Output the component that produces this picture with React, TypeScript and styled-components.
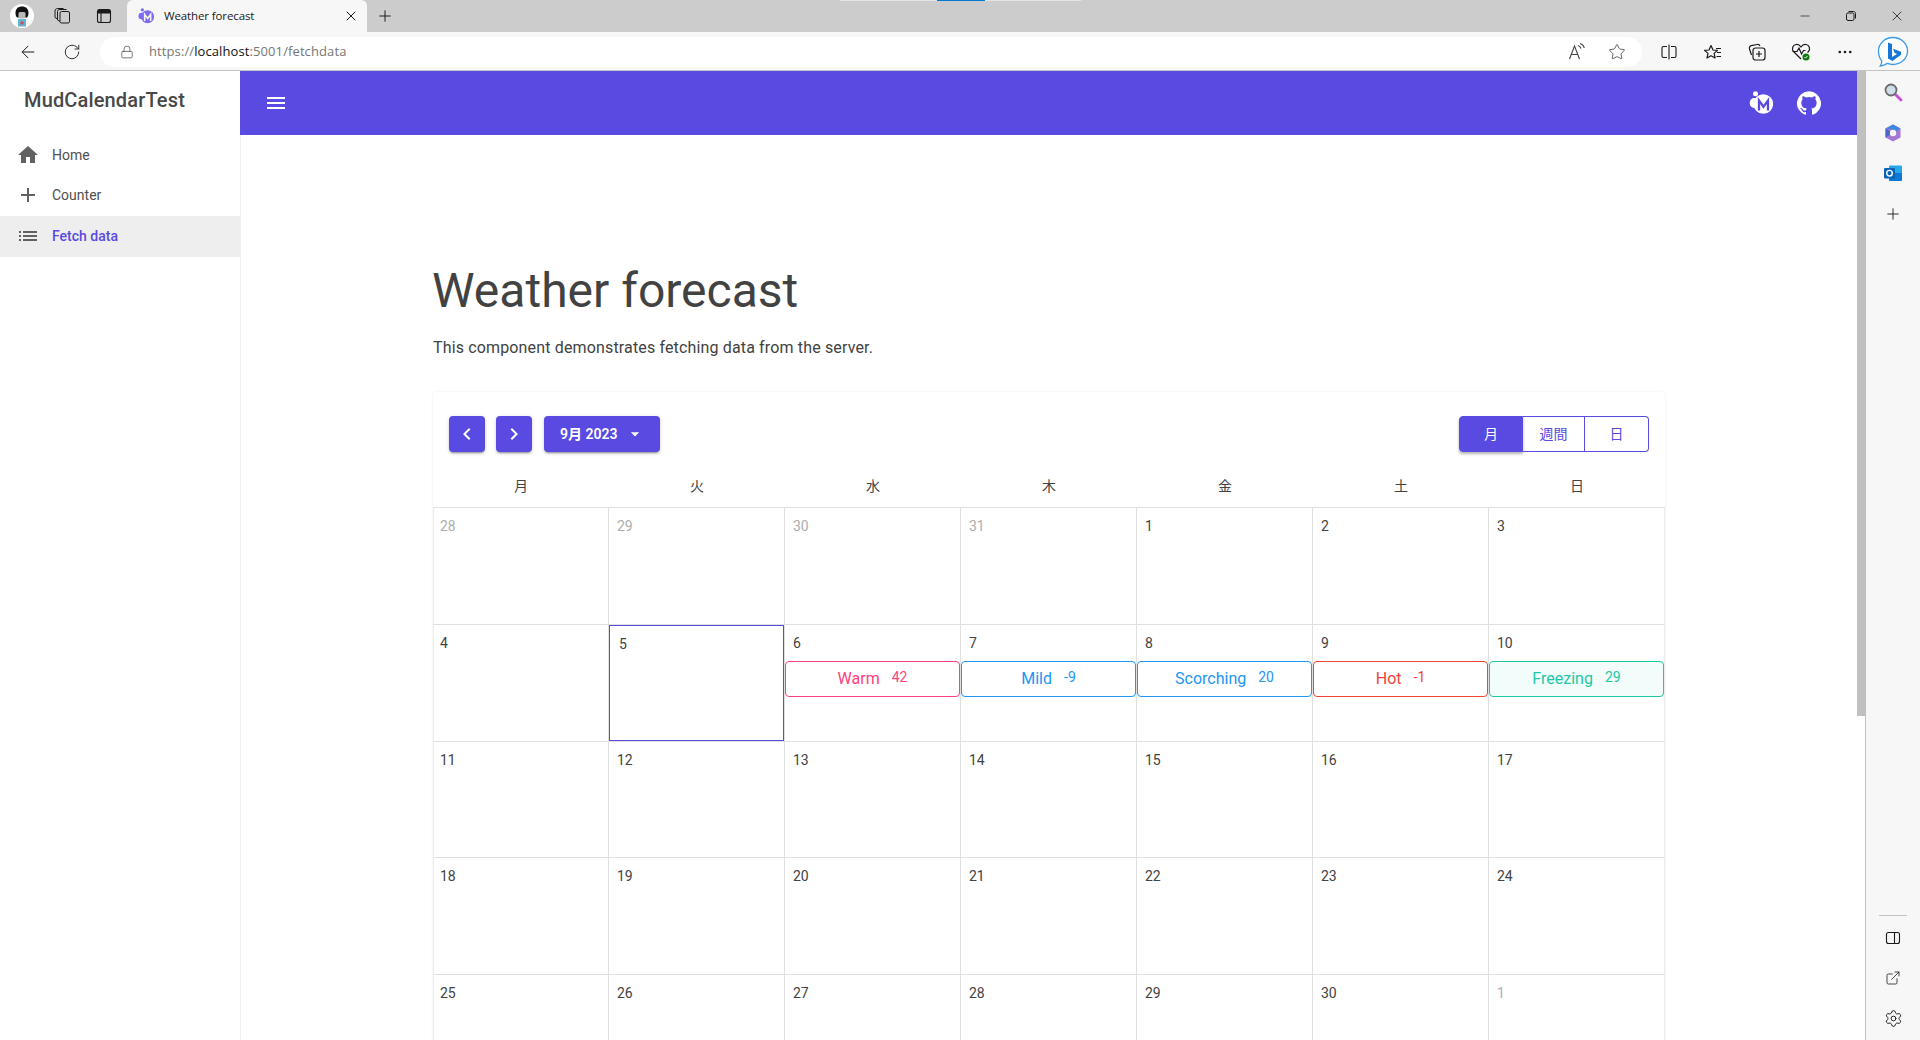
import React from "react";
import styled, { createGlobalStyle } from "styled-components";
import {
  ArrowLeft,
  ExternalLink,
  Lock,
  MoreHorizontal,
  Plus,
  RotateCw,
  Settings,
  Star,
  X,
  Minus,
} from "lucide-react";

const PRIMARY = "#594ae2";
const TEXT = "#424242";
const LINE = "#e0e0e0";

const GlobalStyle = createGlobalStyle`
  html, body {
    margin: 0;
    height: 100%;
    overflow: hidden;
    background: #fff;
  }
  * {
    box-sizing: border-box;
  }
  body {
    font-family: Roboto, "Noto Sans CJK JP", sans-serif;
    color: ${TEXT};
  }
`;

const Window = styled.div`
  position: relative;
  width: 1920px;
  height: 1040px;
  display: flex;
  flex-direction: column;
  overflow: hidden;
`;

const CaptureBar = styled.div`
  position: absolute;
  top: 0;
  left: 840px;
  width: 241px;
  height: 1px;
  background: #e4e4e4;
  display: flex;
  justify-content: center;
  &::after {
    content: "";
    width: 48px;
    background: #0078d4;
  }
`;

const TabStrip = styled.div`
  height: 32px;
  background: #cccccc;
  display: flex;
  align-items: center;
  flex-shrink: 0;
`;

const StripIcon = styled.div<{ $width: number }>`
  width: ${(p) => p.$width}px;
  display: flex;
  align-items: center;
  justify-content: center;
  color: #1a1a1a;
`;

const Tab = styled.div`
  width: 240px;
  height: 32px;
  background: #f7f7f7;
  border-radius: 6px 6px 0 0;
  display: flex;
  align-items: center;
  padding: 0 8px 0 11px;
  gap: 10px;
  font: 11.5px "Open Sans", sans-serif;
  color: #1a1a1a;
`;

const TabTitle = styled.span`
  flex: 1;
  letter-spacing: -0.12px;
  padding-bottom: 2px;
`;

const WindowControls = styled.div`
  margin-left: auto;
  display: flex;
  align-items: center;
  color: #1a1a1a;
`;

const WindowControl = styled.div`
  width: 46px;
  display: flex;
  justify-content: center;
`;

const Toolbar = styled.div`
  height: 39px;
  background: #f7f7f7;
  border-bottom: 1px solid #c4c4c4;
  display: flex;
  align-items: center;
  flex-shrink: 0;
  padding-top: 1px;
`;

const ToolButton = styled.div<{ $width: number; $gap?: number }>`
  width: ${(p) => p.$width}px;
  margin-left: ${(p) => p.$gap || 0}px;
  display: flex;
  align-items: center;
  justify-content: center;
  color: #1a1a1a;
  flex-shrink: 0;
`;

const AddressBar = styled.div`
  width: 1542px;
  height: 30px;
  margin-left: 12px;
  background: #fff;
  border-radius: 15px;
  display: flex;
  align-items: center;
  padding: 0 5px 0 20px;
  font: 13px "Open Sans", sans-serif;
  color: #767676;
  flex-shrink: 0;
  svg:first-child {
    color: #444;
  }
`;

const UrlText = styled.span`
  margin-left: 15px;
  flex: 1;
  letter-spacing: 0.1px;
  position: relative;
  top: -1px;
  b {
    font-weight: 400;
    color: #111;
  }
`;

const AddressAction = styled.div`
  width: 40px;
  display: flex;
  justify-content: center;
  color: #777;
`;

const Body = styled.div`
  flex: 1;
  display: flex;
  min-height: 0;
`;

const Page = styled.div`
  flex: 1;
  display: flex;
  min-width: 0;
`;

const Drawer = styled.nav`
  width: 240px;
  flex-shrink: 0;
  background: #fff;
`;

const DrawerTitle = styled.div`
  height: 64px;
  padding: 0 24px;
  display: flex;
  align-items: center;
  font-size: 20px;
  font-weight: 500;
  letter-spacing: 0.15px;
  color: #484848;
  margin-top: -3px;
`;

const NavList = styled.div`
  padding-top: 3px;
`;

const NavItem = styled.div<{ $active?: boolean }>`
  height: 40.5px;
  display: flex;
  align-items: center;
  padding: 0 0 1px 16px;
  gap: 12px;
  font-size: 14px;
  font-weight: ${(p) => (p.$active ? 500 : 400)};
  color: ${(p) => (p.$active ? PRIMARY : "#505050")};
  background: ${(p) => (p.$active ? "#eeeeee" : "transparent")};
  svg {
    color: #616161;
  }
`;

const Content = styled.div`
  flex: 1;
  min-width: 0;
  display: flex;
  flex-direction: column;
  border-left: 1px solid #eeeeee;
`;

const AppBar = styled.header`
  height: 64px;
  margin-left: -1px;
  flex-shrink: 0;
  background: ${PRIMARY};
  color: #fff;
  display: flex;
  align-items: center;
  padding: 0 24px;
`;

const AppBarButton = styled.div`
  width: 48px;
  height: 48px;
  display: flex;
  align-items: center;
  justify-content: center;
`;

const MenuButton = styled(AppBarButton)`
  margin-right: auto;
  width: 24px;
`;

const Container = styled.main`
  width: 1280px;
  margin: 0 auto;
  padding: 124px 24px 0;
`;

const Heading = styled.h1`
  margin: 0 0 0 -1px;
  font-size: 48px;
  font-weight: 400;
  line-height: 64px;
  color: ${TEXT};
`;

const Lead = styled.p`
  margin: 13px 0 0;
  font-size: 16px;
  line-height: 24px;
  letter-spacing: 0.15px;
  color: ${TEXT};
`;

const Card = styled.section`
  margin-top: 32px;
  background: #fff;
  border-radius: 4px;
  box-shadow: 0 0 3px rgba(0, 0, 0, 0.08);
`;

const CalendarBar = styled.div`
  display: flex;
  align-items: center;
  padding: 24px 16px 0 16px;
  gap: 11px;
`;

const FilledButton = styled.button`
  height: 36px;
  width: 36px;
  border: none;
  border-radius: 4px;
  background: ${PRIMARY};
  color: #fff;
  display: flex;
  align-items: center;
  justify-content: center;
  padding: 0;
  box-shadow: 0 3px 1px -2px rgba(0, 0, 0, 0.2), 0 2px 2px 0 rgba(0, 0, 0, 0.14), 0 1px 5px 0 rgba(0, 0, 0, 0.12);
`;

const DateButton = styled(FilledButton)`
  width: 116px;
  margin-left: 1px;
  justify-content: flex-start;
  padding: 0 0 2px 16px;
  font: 600 14px Roboto, "Noto Sans CJK JP", sans-serif;
  svg {
    margin: 2px 0 0 8px;
  }
`;

const ViewGroup = styled.div`
  margin-left: auto;
  display: flex;
  height: 36px;
`;

const ViewButton = styled.button<{ $active?: boolean; $width: number }>`
  width: ${(p) => p.$width}px;
  border: 1px solid ${PRIMARY};
  border-left-width: 0;
  background: ${(p) => (p.$active ? PRIMARY : "#fff")};
  color: ${(p) => (p.$active ? "#fff" : PRIMARY)};
  font: 400 14px Roboto, "Noto Sans CJK JP", sans-serif;
  padding: 0 0 2px;
  ${(p) => p.$active && "box-shadow: 0 2px 3px rgba(0, 0, 0, 0.3); position: relative;"}
  &:first-child {
    border-radius: 4px 0 0 4px;
    border-left-width: 1px;
  }
  &:last-child {
    border-radius: 0 4px 4px 0;
  }
`;

const Weekdays = styled.div`
  display: grid;
  grid-template-columns: repeat(7, 176px);
  height: 56px;
  border-bottom: 1px solid ${LINE};
`;

const Weekday = styled.div`
  display: flex;
  align-items: center;
  justify-content: center;
  padding-top: 11px;
  font-size: 14px;
  color: ${TEXT};
`;

const MonthGrid = styled.div`
  display: grid;
  grid-template-columns: repeat(7, 176px);
  grid-auto-rows: 116.75px;
`;

const DayNumber = styled.div<{ $muted?: boolean }>`
  padding-left: 8px;
  font-size: 14px;
  line-height: 20px;
  color: ${(p) => (p.$muted ? "#adadad" : TEXT)};
`;

const Cell = styled.div<{ $selected?: boolean }>`
  border-right: 1px solid ${LINE};
  border-bottom: 1px solid ${LINE};
  padding: 8px 0 0;
  &:nth-child(7n + 1) {
    box-shadow: inset 1px 0 0 #ececec;
  }
  &:nth-child(7n + 1) ${DayNumber} {
    padding-left: 7px;
  }
  &:nth-child(7n) {
    border-right-color: #ececec;
  }
  ${(p) =>
    p.$selected &&
    `
    box-shadow: inset 0 0 0 1px ${PRIMARY};
    padding: 9px 0 0 2px;
  `}
`;

const EventChip = styled.div<{ $color: string; $tint?: string }>`
  height: 36px;
  margin: 8px 0 0 0;
  width: 175px;
  border: 1px solid ${(p) => p.$color};
  border-radius: 4px;
  background: ${(p) => p.$tint || "#fff"};
  color: ${(p) => p.$color};
  display: flex;
  align-items: center;
  justify-content: center;
  gap: 12px;
  font-size: 16px;
`;

const EventValue = styled.span`
  font-size: 14px;
  position: relative;
  top: -2px;
`;

const ScrollTrack = styled.div`
  width: 9px;
  flex-shrink: 0;
  border-right: 1px solid #c0c0c0;
`;

const ScrollThumb = styled.div`
  height: 645px;
  margin-right: -1px;
  background: #c0c0c0;
`;

const EdgeBar = styled.aside`
  width: 54px;
  flex-shrink: 0;
  background: #f7f7f7;
  display: flex;
  flex-direction: column;
  align-items: center;
  color: #1a1a1a;
  padding-top: 1px;
`;

const EdgeIcon = styled.div`
  height: 40.5px;
  display: flex;
  align-items: center;
  justify-content: center;
`;

const EdgeBottom = styled.div`
  margin-top: auto;
  padding-bottom: 2px;
  display: flex;
  flex-direction: column;
  align-items: center;
`;

const EdgeRule = styled.div`
  width: 28px;
  height: 1px;
  background: #c4c4c4;
  margin-bottom: 2px;
`;

const EdgeBottomIcon = styled.div`
  height: 40px;
  display: flex;
  align-items: center;
  justify-content: center;
`;

const MaterialIcon = ({ d, size = 24 }: { d: string; size?: number }) => (
  <svg width={size} height={size} viewBox="0 0 24 24" fill="currentColor">
    <path d={d} />
  </svg>
);

const HOME = "M10 20v-6h4v6h5v-8h3L12 3 2 12h3v8z";
const ADD = "M19 13h-6v6h-2v-6H5v-2h6V5h2v6h6v2z";
const LIST = "M3 13h2v-2H3v2zm0 4h2v-2H3v2zm0-8h2V7H3v2zm4 4h14v-2H7v2zm0 4h14v-2H7v2zM7 7v2h14V7H7z";
const MENU = "M3 18h18v-2H3v2zm0-5h18v-2H3v2zm0-7v2h18V6H3z";
const PREV = "M15.41 7.41L14 6l-6 6 6 6 1.41-1.41L10.83 12z";
const NEXT = "M10 6L8.59 7.41 13.17 12l-4.58 4.59L10 18l6-6z";
const DROP = "M7 10l5 5 5-5z";
const GITHUB =
  "M12 .3a12 12 0 0 0-3.8 23.4c.6.1.8-.3.8-.6v-2c-3.3.7-4-1.6-4-1.6-.6-1.4-1.4-1.8-1.4-1.8-1-.7.1-.7.1-.7 1.2 0 1.9 1.2 1.9 1.2 1 1.8 2.8 1.3 3.5 1 0-.8.4-1.3.7-1.6-2.7-.3-5.5-1.3-5.5-6 0-1.2.5-2.3 1.3-3.1-.2-.4-.6-1.6 0-3.2 0 0 1-.3 3.4 1.2a11.5 11.5 0 0 1 6 0c2.3-1.5 3.3-1.2 3.3-1.2.6 1.6.2 2.8 0 3.2.9.8 1.3 1.9 1.3 3.2 0 4.6-2.8 5.6-5.5 5.9.5.4.9 1 .9 2.2v3.3c0 .3.1.7.8.6A12 12 0 0 0 12 .3";

// blob with a dot and a cut-out M, used for the favicon and the app bar
const MudLogo = ({ size, color, cut }: { size: number; color: string; cut: string }) => (
  <svg width={size} height={size} viewBox="0 0 24 24">
    <circle cx="6.500" cy="2.800" r="2.500" fill={color} />
    <circle cx="14.300" cy="13" r="9.800" fill={color} />
    <ellipse cx="5" cy="12" rx="4.300" ry="5" fill={color} />
    <path d="M10 19.500V9.500l4.500 6.200L19 9.500v10" fill="none" stroke={cut} strokeWidth="2.300" />
  </svg>
);

const Avatar = () => (
  <svg width="24" height="24" viewBox="0 0 24 24">
    <circle cx="12" cy="12" r="12" fill="#fff" />
    <path d="M5.500 9c0-4.500 3-6.500 6.500-6.500S18.500 4.500 18.500 9c0 2-.7 3.500-1.500 4.500H7C6.200 12.500 5.500 11 5.500 9z" fill="#111" />
    <rect x="8.500" y="8" width="7" height="6.500" rx="1.500" fill="#b9b9b9" />
    <rect x="8" y="15" width="8" height="7.500" fill="#5fb6d6" />
    <rect x="10.500" y="17.500" width="3" height="3" fill="#d9465a" />
  </svg>
);

const Workspaces = () => (
  <svg width="18" height="18" viewBox="0 0 18 18" fill="none" stroke="currentColor" strokeWidth="1">
    <rect x="7" y="4.500" width="9.500" height="11.500" rx="1.500" />
    <path d="M7 14.500 4.500 13V4.500C4.500 3 5.500 2.500 7 2.500h6.500" />
    <path d="M4.500 12 2 10.500V4C2 2.500 3 1.500 4.500 1.500h6" />
  </svg>
);

const VerticalTabs = () => (
  <svg width="16" height="16" viewBox="0 0 16 16" fill="none" stroke="currentColor" strokeWidth="1.100">
    <rect x="1.500" y="1.500" width="13" height="13" rx="2" />
    <path d="M1.500 5h13M5 5v9.500" />
    <rect x="2" y="2" width="12" height="3" fill="currentColor" stroke="none" />
  </svg>
);

const RestoreIcon = () => (
  <svg width="12" height="12" viewBox="0 0 12 12" fill="none" stroke="currentColor">
    <rect x="1.500" y="3" width="7.500" height="7.500" rx="1.500" />
    <path d="M3.500 1.500h5c1.200 0 2 .8 2 2v5" />
  </svg>
);

const ReadAloud = () => (
  <svg width="20" height="20" viewBox="0 0 20 20" fill="none" stroke="currentColor" strokeWidth="1.100">
    <path d="M2.500 17 7.500 4l5 13M4.300 12.500h6.400" />
    <path d="M11 3.500c1.500.4 2.500 1.500 3 3M13 1.500c2.300.6 3.800 2.200 4.300 4.500" />
  </svg>
);

const SplitScreen = () => (
  <svg width="18" height="18" viewBox="0 0 18 18" fill="none" stroke="currentColor" strokeWidth="1.100">
    <path d="M7 3.500H3.500c-1 0-1.500.5-1.500 1.500v8c0 1 .5 1.500 1.500 1.500H7M11 3.500h3.500c1 0 1.500.5 1.500 1.500v8c0 1-.5 1.500-1.500 1.500H11M9 1.500v15" />
  </svg>
);

const Favorites = () => (
  <svg width="20" height="20" viewBox="0 0 20 20" fill="none" stroke="currentColor" strokeWidth="1.200">
    <path d="M8 2.500 10 7l4.500.4-3.400 3 1 4.600L8 12.700 4 15l1-4.600-3.500-3L6 7z" strokeLinejoin="round" transform="translate(0 1)" />
    <path d="M13 6.500h5M14 10.500h4M13.500 14.500h4.500" />
  </svg>
);

const Collections = () => (
  <svg width="20" height="20" viewBox="0 0 20 20" fill="none" stroke="currentColor" strokeWidth="1.200">
    <path d="M4.500 13 2.500 7c-.4-1.500.3-3 1.800-3.400L10 2.500c1.200-.3 2.500.4 3 1.500" />
    <rect x="6" y="6" width="12" height="12" rx="2.500" fill="#f7f7f7" />
    <path d="M12 9v6M9 12h6" />
  </svg>
);

const Performance = () => (
  <svg width="22" height="22" viewBox="0 0 22 22">
    <path
      d="M11 18 3.500 10.500C1.500 8 2.500 4 6 3.500c2-.3 3.800.7 5 2.500 1.200-1.800 3-2.800 5-2.500 3.500.5 4.500 4.500 2.500 7l-1 1"
      fill="none"
      stroke="#1a1a1a"
      strokeWidth="1.200"
    />
    <path d="M2.500 10.500H7l2-3.500 2.500 6 2-3.500h2" fill="none" stroke="#1a1a1a" strokeWidth="1.200" />
    <circle cx="16" cy="16" r="3.500" fill="#107c10" />
    <path d="m14.500 16 1.100 1.100 2-2.200" fill="none" stroke="#fff" strokeWidth=".9" />
  </svg>
);

const BingLogo = () => (
  <svg width="32" height="32" viewBox="0 0 32 32">
    <path
      d="M16 1.500c8 0 14.500 6 14.500 13.500S24 28.500 16 28.500c-2 0-4-.4-5.700-1.100-1.800 1.200-4 2.300-7 2.600 1-1.400 1.400-3 1.500-5C2.700 22.500 1.500 19 1.500 15 1.500 7.500 8 1.500 16 1.500z"
      fill="#fff"
      stroke="#3a9be8"
      strokeWidth="1.300"
    />
    <path d="M11 6.500 15 8v13l5-3-2.500-1.300-1.500-4 8 3v3L15.500 25 11 22.500z" fill="#1677d8" />
  </svg>
);

const EdgeSearch = () => (
  <svg width="20" height="20" viewBox="0 0 20 20">
    <path d="m12 12 6 6" stroke="#c94fd8" strokeWidth="2.800" strokeLinecap="round" />
    <circle cx="8" cy="8" r="5.500" fill="#cfe0ea" stroke="#6b6b6b" strokeWidth="1.800" />
  </svg>
);

const CopilotMark = () => (
  <svg width="20" height="20" viewBox="0 0 20 20">
    <path d="M10 1.500 17.500 5.500v9L10 18.500 2.500 14.500v-9z" fill="#a678d6" />
    <path d="M10 1.500 17.500 5.500 13 8.500 10 6.500 2.500 5.500z" fill="#3f86e0" />
    <path d="M2.500 5.500v9L7 12V8z" fill="#4a67c8" />
    <circle cx="10" cy="10" r="3.200" fill="#f7f7f7" />
  </svg>
);

const OutlookMark = () => (
  <svg width="20" height="20" viewBox="0 0 20 20">
    <rect x="6" y="2.500" width="13" height="15" rx="1.200" fill="#28a8ea" />
    <path d="M6 10h13v7a1 1 0 0 1-1 1H7a1 1 0 0 1-1-1z" fill="#0f78d4" />
    <rect x="1" y="5" width="11" height="10.500" rx="1" fill="#0a64b8" />
    <circle cx="6.500" cy="10.200" r="2.800" fill="none" stroke="#fff" strokeWidth="1.400" />
  </svg>
);

const SidePanel = () => (
  <svg width="16" height="16" viewBox="0 0 16 16" fill="none" stroke="currentColor" strokeWidth="1.100">
    <rect x="1.500" y="2.500" width="13" height="11" rx="2" />
    <path d="M9.500 2.500v11" />
  </svg>
);

type CalendarEvent = { label: string; value: string; color: string; tint?: string };

const EVENTS: Record<number, CalendarEvent> = {
  6: { label: "Warm", value: "42", color: "#ff4081" },
  7: { label: "Mild", value: "-9", color: "#2196f3" },
  8: { label: "Scorching", value: "20", color: "#2196f3" },
  9: { label: "Hot", value: "-1", color: "#f44336" },
  10: { label: "Freezing", value: "29", color: "#1ec8a5", tint: "#f2fcfa" },
};

const WEEKDAYS = ["月", "火", "水", "木", "金", "土", "日"];

const DAYS = [
  ...[28, 29, 30, 31].map((day) => ({ day, muted: true })),
  ...Array.from({ length: 30 }, (_, i) => ({ day: i + 1, muted: false })),
  { day: 1, muted: true },
];

const App = () => {
  return (
    <>
      <GlobalStyle />
      <Window>
        <CaptureBar />
        <TabStrip>
          <StripIcon $width={44}>
            <Avatar />
          </StripIcon>
          <StripIcon $width={36}>
            <Workspaces />
          </StripIcon>
          <StripIcon $width={47}>
            <VerticalTabs />
          </StripIcon>
          <Tab>
            <MudLogo size={16} color="#7c6cf0" cut="#f7f7f7" />
            <TabTitle>Weather forecast</TabTitle>
            <X size={16} strokeWidth={1.5} />
          </Tab>
          <StripIcon $width={36}>
            <Plus size={18} strokeWidth={1.3} />
          </StripIcon>
          <WindowControls>
            <WindowControl>
              <Minus size={14} strokeWidth={1.2} />
            </WindowControl>
            <WindowControl>
              <RestoreIcon />
            </WindowControl>
            <WindowControl>
              <X size={16} strokeWidth={1.2} />
            </WindowControl>
          </WindowControls>
        </TabStrip>
        <Toolbar>
          <ToolButton $width={56}>
            <ArrowLeft size={20} strokeWidth={1.2} />
          </ToolButton>
          <ToolButton $width={32}>
            <RotateCw size={18} strokeWidth={1.2} />
          </ToolButton>
          <AddressBar>
            <Lock size={14} strokeWidth={1.2} />
            <UrlText>
              https://<b>localhost</b>:5001/fetchdata
            </UrlText>
            <AddressAction>
              <ReadAloud />
            </AddressAction>
            <AddressAction>
              <Star size={18} strokeWidth={1.1} />
            </AddressAction>
          </AddressBar>
          <ToolButton $width={44} $gap={5}>
            <SplitScreen />
          </ToolButton>
          <ToolButton $width={44}>
            <Favorites />
          </ToolButton>
          <ToolButton $width={44}>
            <Collections />
          </ToolButton>
          <ToolButton $width={44}>
            <Performance />
          </ToolButton>
          <ToolButton $width={44}>
            <MoreHorizontal size={18} strokeWidth={1.6} />
          </ToolButton>
          <ToolButton $width={52}>
            <BingLogo />
          </ToolButton>
        </Toolbar>
        <Body>
          <Page>
            <Drawer>
              <DrawerTitle>MudCalendarTest</DrawerTitle>
              <NavList>
                <NavItem>
                  <MaterialIcon d={HOME} />
                  Home
                </NavItem>
                <NavItem>
                  <MaterialIcon d={ADD} />
                  Counter
                </NavItem>
                <NavItem $active>
                  <MaterialIcon d={LIST} />
                  Fetch data
                </NavItem>
              </NavList>
            </Drawer>
            <Content>
              <AppBar>
                <MenuButton>
                  <MaterialIcon d={MENU} />
                </MenuButton>
                <AppBarButton>
                  <MudLogo size={24} color="#fff" cut={PRIMARY} />
                </AppBarButton>
                <AppBarButton>
                  <MaterialIcon d={GITHUB} />
                </AppBarButton>
              </AppBar>
              <Container>
                <Heading>Weather forecast</Heading>
                <Lead>This component demonstrates fetching data from the server.</Lead>
                <Card>
                  <CalendarBar>
                    <FilledButton aria-label="previous">
                      <MaterialIcon d={PREV} />
                    </FilledButton>
                    <FilledButton aria-label="next">
                      <MaterialIcon d={NEXT} />
                    </FilledButton>
                    <DateButton>
                      9月 2023
                      <MaterialIcon d={DROP} size={20} />
                    </DateButton>
                    <ViewGroup>
                      <ViewButton $active $width={64}>
                        月
                      </ViewButton>
                      <ViewButton $width={62}>週間</ViewButton>
                      <ViewButton $width={64}>日</ViewButton>
                    </ViewGroup>
                  </CalendarBar>
                  <Weekdays>
                    {WEEKDAYS.map((name) => (
                      <Weekday key={name}>{name}</Weekday>
                    ))}
                  </Weekdays>
                  <MonthGrid>
                    {DAYS.map(({ day, muted }, i) => {
                      const event = muted ? undefined : EVENTS[day];
                      return (
                        <Cell key={i} $selected={!muted && day === 5}>
                          <DayNumber $muted={muted}>{day}</DayNumber>
                          {event && (
                            <EventChip $color={event.color} $tint={event.tint}>
                              <span>{event.label}</span>
                              <EventValue>{event.value}</EventValue>
                            </EventChip>
                          )}
                        </Cell>
                      );
                    })}
                  </MonthGrid>
                </Card>
              </Container>
            </Content>
          </Page>
          <ScrollTrack>
            <ScrollThumb />
          </ScrollTrack>
          <EdgeBar>
            <EdgeIcon>
              <EdgeSearch />
            </EdgeIcon>
            <EdgeIcon>
              <CopilotMark />
            </EdgeIcon>
            <EdgeIcon>
              <OutlookMark />
            </EdgeIcon>
            <EdgeIcon>
              <Plus size={18} strokeWidth={1.2} />
            </EdgeIcon>
            <EdgeBottom>
              <EdgeRule />
              <EdgeBottomIcon>
                <SidePanel />
              </EdgeBottomIcon>
              <EdgeBottomIcon>
                <ExternalLink size={16} strokeWidth={1.2} />
              </EdgeBottomIcon>
              <EdgeBottomIcon>
                <Settings size={19} strokeWidth={1.2} />
              </EdgeBottomIcon>
            </EdgeBottom>
          </EdgeBar>
        </Body>
      </Window>
    </>
  );
};

export default App;
